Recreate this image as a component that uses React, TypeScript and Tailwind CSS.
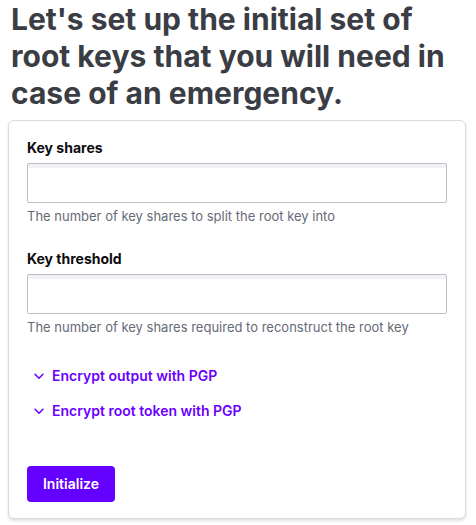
import React from "react";

function Chevron() {
  return (
    <svg width="14" height="14" viewBox="0 0 16 16" fill="none" className="shrink-0">
      <path d="M3.5 6l4.5 4.5L12.5 6" stroke="currentColor" strokeWidth="1.8" strokeLinecap="round" strokeLinejoin="round" />
    </svg>
  );
}

function Field({ label, help }: { label: string; help: string }) {
  return (
    <div className="flex flex-col">
      <label className="text-[14px] leading-[20px] font-bold text-[#0c0c0e]">{label}</label>
      <input
        type="text"
        className="mt-[5px] h-[40px] w-full rounded-[2px] border border-[#bcbfc8] bg-white shadow-[inset_0_4px_0_#f1f2f3] outline-none"
      />
      <p className="mt-[4px] text-[13px] leading-[18px] text-[#656a76]">{help}</p>
    </div>
  );
}

export default function App() {
  return (
    <div className="w-[476px] h-[525px] bg-white overflow-hidden" style={{ fontFamily: "Inter, 'Noto Sans', sans-serif" }}>
      <h1 className="whitespace-nowrap pl-[11px] pt-[1px] text-[30px] leading-[37px] font-bold tracking-[0px] text-[#3b3d45]">
        Let's set up the initial set of
        <br />
        root keys that you will need in
        <br />
        case of an emergency.
      </h1>
      <div className="mx-[8px] mt-[8px] w-[458px] rounded-[6px] border border-[#d9dbe0] bg-white px-[18px] pt-[17px] pb-[16px] shadow-[0_2px_3px_rgba(0,0,0,0.12)]">
        <Field label="Key shares" help="The number of key shares to split the root key into" />
        <div className="mt-[24px]">
          <Field label="Key threshold" help="The number of key shares required to reconstruct the root key" />
        </div>
        <div className="mt-[30px] flex items-center gap-[6px] pl-[5px] text-[14px] leading-[20px] font-semibold text-[#6a00ff]">
          <Chevron />
          <span>Encrypt output with PGP</span>
        </div>
        <div className="mt-[15px] flex items-center gap-[6px] pl-[5px] text-[14px] leading-[20px] font-semibold text-[#6a00ff]">
          <Chevron />
          <span>Encrypt root token with PGP</span>
        </div>
        <button className="mt-[45px] flex h-[36px] w-[88px] items-center justify-center rounded-[4px] bg-[#6300ff] pb-[2px] text-[14px] font-semibold text-white">
          Initialize
        </button>
      </div>
    </div>
  );
}
